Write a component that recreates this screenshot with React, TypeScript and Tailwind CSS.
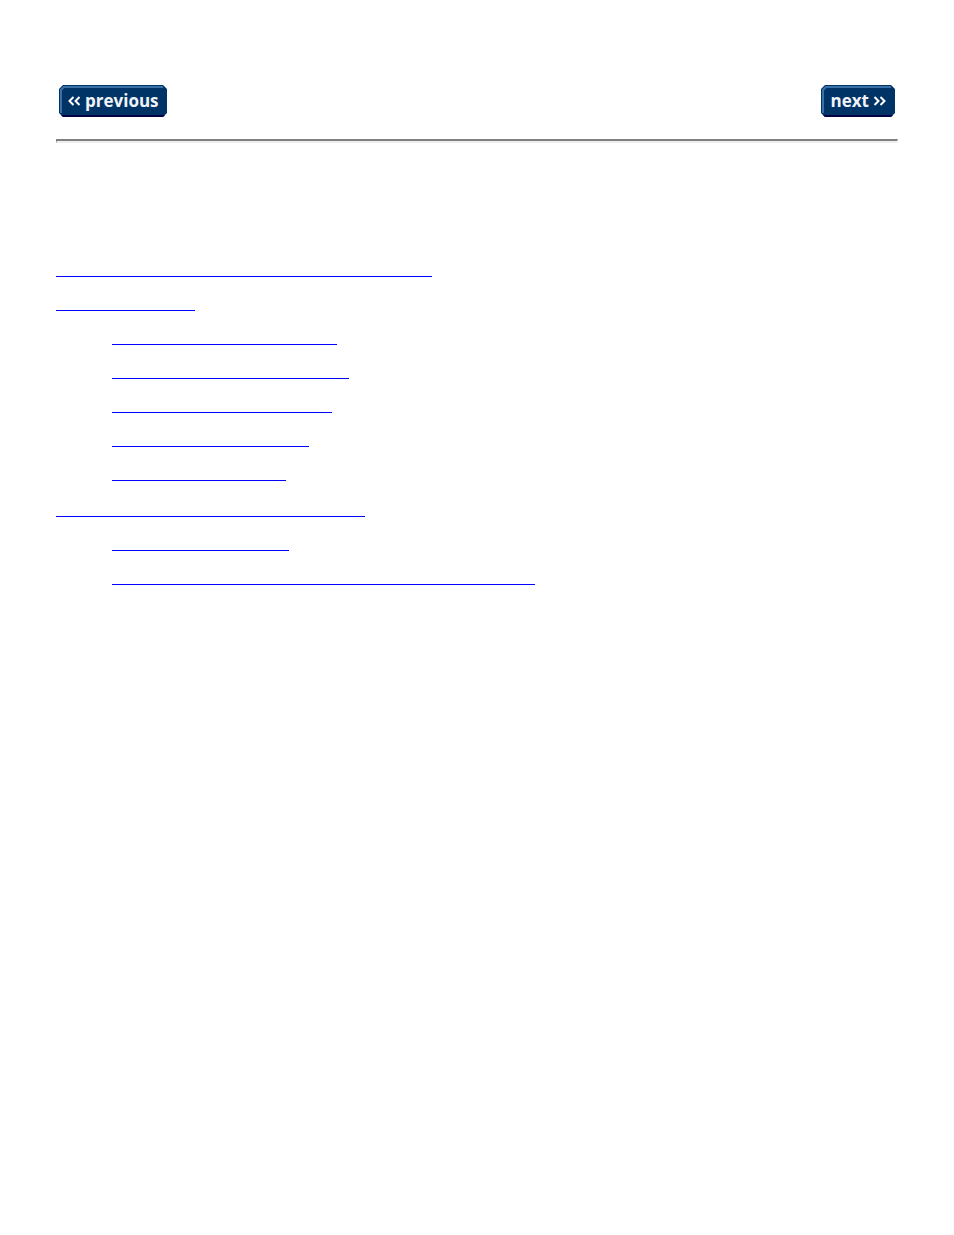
const chapters = [
  { label: 'Chapter 1', width: 'w-[376px]', sections: [] },
  {
    label: 'Chapter 2',
    width: 'w-[139px]',
    sections: [
      { label: 'Section 2.1', width: 'w-[225px]' },
      { label: 'Section 2.2', width: 'w-[237px]' },
      { label: 'Section 2.3', width: 'w-[220px]' },
      { label: 'Section 2.4', width: 'w-[197px]' },
      { label: 'Section 2.5', width: 'w-[174px]' },
    ],
  },
  {
    label: 'Chapter 3',
    width: 'w-[309px]',
    sections: [
      { label: 'Section 3.1', width: 'w-[177px]' },
      { label: 'Section 3.2', width: 'w-[423px]' },
    ],
  },
];

// Bevelled plate behind the button text, drawn for a given width
function Plate({ width }: { width: number }) {
  const w = width;
  return (
    <svg className="absolute inset-0" width={w} height="32" viewBox={`0 0 ${w} 32`} aria-hidden="true">
      <path d={`M4 0H${w - 4}L${w} 4V28L${w - 4} 32H4L0 28V4Z`} fill="#003366" />
      <path d={`M2 30H${w - 2}L${w - 4} 32H4Z`} fill="#000044" />
      <path d={`M2 28V5L5 2H${w - 4}`} fill="none" stroke="#3a72a8" strokeWidth="2" />
    </svg>
  );
}

function Chevrons({ flip = false }: { flip?: boolean }) {
  return (
    <svg className={flip ? 'relative -scale-x-100' : 'relative'} width="14" height="10" viewBox="0 0 14 10" aria-hidden="true">
      <path d="M6.5 1L2.5 5L6.5 9M12.5 1L8.5 5L12.5 9" fill="none" stroke="#fff" strokeWidth="2" />
    </svg>
  );
}

function EntryLink({ label, width }: { label: string; width: string }) {
  return <a href="#" aria-label={label} className={`block h-[34px] max-w-full border-b border-[#0000ff] ${width}`} />;
}

export default function App() {
  return (
    <div className="min-h-screen bg-white px-14 pt-[85px] font-['Open_Sans',sans-serif]">
      <nav className="flex justify-between px-[3px]">
        <a href="#" className="relative flex h-8 w-[108px] items-center gap-1 pl-2 text-[17px] font-bold leading-8 text-[#f0f4f8]">
          <Plate width={108} />
          <Chevrons />
          <span className="relative">previous</span>
        </a>
        <a href="#" className="relative flex h-8 w-[74px] items-center justify-end gap-1 pr-2 text-[17px] font-bold leading-8 text-[#f0f4f8]">
          <Plate width={74} />
          <span className="relative">next</span>
          <Chevrons flip />
        </a>
      </nav>

      <hr className="mt-[22px] border-y-2 border-x border-t-[#808080] border-b-[#eeeeee] border-l-[#808080] border-r-[#eeeeee]" />

      <ul className="mt-[100px]">
        {chapters.map((chapter) => (
          <li key={chapter.label} className="last:pt-0.5">
            <EntryLink label={chapter.label} width={chapter.width} />
            {chapter.sections.length > 0 && (
              <ul className="pl-14">
                {chapter.sections.map((section) => (
                  <li key={section.label}>
                    <EntryLink label={section.label} width={section.width} />
                  </li>
                ))}
              </ul>
            )}
          </li>
        ))}
      </ul>
    </div>
  );
}
